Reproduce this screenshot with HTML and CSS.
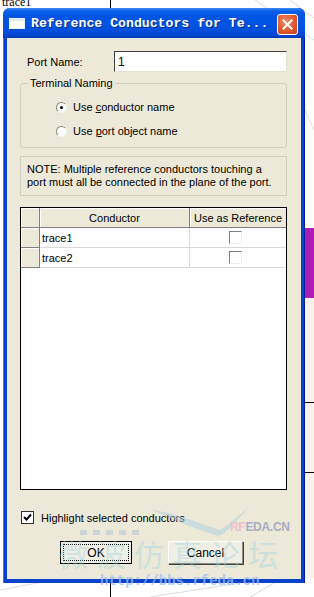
FILE: index.html
```html
<!DOCTYPE html>
<html>
<head>
<meta charset="utf-8">
<title>Reference Conductors for Terminal</title>
<link rel="stylesheet" href="styles.css">
</head>
<body>
<div class="desktop">
  <svg class="backdrop" width="314" height="597" viewBox="0 0 314 597">
    <g stroke="#dcdcdc" stroke-width="1" fill="none">
      <path d="M255 0 L314 40"/>
      <path d="M290 0 L314 18"/>
      <path d="M305 110 L314 130"/>
      <path d="M305 300 L314 330"/>
      <path d="M305 420 L314 440"/>
      <path d="M0 590 L80 575"/>
      <path d="M150 597 L240 583"/>
      <path d="M250 597 L314 560"/>
    </g>
    <line x1="110.5" y1="0" x2="110.5" y2="597" stroke="#000"/>
    <rect x="305" y="228" width="9" height="70" fill="#b01cb8"/>
    <rect x="305" y="298" width="9" height="280" fill="#faf2ef"/>
    <line x1="305" y1="402.5" x2="314" y2="402.5" stroke="#000"/>
    <line x1="305" y1="472.5" x2="314" y2="472.5" stroke="#000"/>
  </svg>
  <span class="bg-label">trace1</span>

  <div class="window">
    <div class="titlebar">
      <span class="title-icon"></span>
      <span class="title-text">Reference Conductors for Te...</span>
      <span class="close-btn">
        <svg width="11" height="11" viewBox="0 0 11 11">
          <path d="M1.5 1.5 L9.5 9.5 M9.5 1.5 L1.5 9.5" stroke="#fff" stroke-width="2" stroke-linecap="square"/>
        </svg>
      </span>
    </div>

    <div class="client">
      <div class="port-row">
        <label class="port-label" for="port-name">Port Name:</label>
        <input class="text-input" id="port-name" type="text" value="1">
      </div>

      <div class="group">
        <span class="legend">Terminal Naming</span>
        <div class="radio-row first">
          <span class="radio checked"></span>
          <span>Use <u>c</u>onductor name</span>
        </div>
        <div class="radio-row">
          <span class="radio"></span>
          <span>Use <u>p</u>ort object name</span>
        </div>
      </div>

      <div class="note">
        NOTE: Multiple reference conductors touching a<br>
        port must all be connected in the plane of the port.
      </div>

      <div class="grid">
        <div class="grid-row grid-head">
          <div class="row-head"></div>
          <div class="cell col-name">Conductor</div>
          <div class="cell col-ref">Use as Reference</div>
        </div>
        <div class="grid-row">
          <div class="row-head"></div>
          <div class="cell col-name">trace1</div>
          <div class="cell col-ref"><span class="cell-check"></span></div>
        </div>
        <div class="grid-row">
          <div class="row-head"></div>
          <div class="cell col-name">trace2</div>
          <div class="cell col-ref"><span class="cell-check"></span></div>
        </div>
      </div>

      <div class="check-row">
        <span class="checkbox">
          <svg width="9" height="9" viewBox="0 0 9 9">
            <path d="M1 4 L3.5 6.5 L8 1.5" stroke="#000" stroke-width="2" fill="none"/>
          </svg>
        </span>
        <span>Highlight selected conductors</span>
      </div>

      <div class="buttons">
        <button class="btn btn-default" type="button"><span class="focus-ring">OK</span></button>
        <button class="btn btn-cancel" type="button">Cancel</button>
      </div>
    </div>
  </div>

  <div class="watermark">
    <span class="wm-squares"><i></i><i></i><i></i><i></i><i></i></span>
    <svg class="wm-bird" width="100" height="40" viewBox="0 0 100 40">
      <path d="M2 10 C30 14 50 24 70 30 C80 24 90 14 98 8 C86 22 76 34 68 36 C48 30 24 20 2 10 Z" fill="#a9cfe0" opacity="0.5"/>
    </svg>
    <span class="wm-site"><span class="wm-rf">RF</span>EDA.CN</span>
    <span class="wm-cn">微波仿真论坛</span>
    <span class="wm-url">http://bbs.rfeda.cn</span>
  </div>
</div>
</body>
</html>
```

FILE: styles.css
```css
html, body { margin: 0; padding: 0; background-color: #fff; }
body { font-family: "Liberation Sans", Arial, sans-serif; font-size: 11px; color: #000; }

.desktop { position: relative; width: 314px; height: 597px; overflow: hidden; display: flex; align-items: flex-start; }
.backdrop { position: absolute; left: 0; top: 0; }
.bg-label { position: absolute; left: 2px; top: -5px; font-family: "Liberation Serif", serif; font-size: 12px; }

/* window frame */
.window { position: relative; margin: 8px 0 0 3px; width: 302px; height: 575px; display: flex; flex-direction: column;
  background-color: #0842cc; border-radius: 7px 7px 0 0; box-shadow: inset 1px 0 0 #3c74e6, inset -1px 0 0 #001ea0; }
.titlebar { height: 30px; flex: none; display: flex; align-items: center; padding: 0 7px 0 6px; border-radius: 7px 7px 0 0;
  background: linear-gradient(#3d8af7 0, #0a5fe8 3px, #0055e5 8px, #0053e0 20px, #0346d4 27px, #0038b0 30px); }
.title-icon { width: 14px; height: 9px; margin: 1px 6px 0 0; background: linear-gradient(#cfe0ff 0, #fff 3px); border: 1px solid #eef4ff; }
.title-text { flex: 1; color: #fff; font-family: "Liberation Mono", "Courier New", monospace; font-weight: bold; font-size: 13.2px;
  text-shadow: 1px 1px 0 #0a2c8a; white-space: nowrap; }
.close-btn { width: 19px; height: 19px; margin-top: 3px; display: flex; align-items: center; justify-content: center;
  border: 1px solid #fff; border-radius: 3px; background: radial-gradient(circle at 40% 35%, #f08a66 0, #e0582e 55%, #c8401a 100%); }

.client { flex: 1; margin: 0 4px 4px 4px; background-color: #ece9d8; padding: 13px 14px 0 13px; display: flex; flex-direction: column; }

/* port name */
.port-row { display: flex; align-items: center; height: 21px; }
.port-label { width: 87px; padding-left: 7px; }
.text-input { width: 173px; height: 21px; box-sizing: border-box; margin: 0; padding: 0 0 0 3px; border: 1px solid;
  border-color: #404040 #e4e2d4 #e4e2d4 #404040; font: inherit; font-size: 12px; background: #fff; outline: none; }

/* group box */
.group { margin-top: 11px; height: 65px; box-sizing: border-box; border: 1px solid #d0d0bf; border-radius: 3px; padding-left: 35px; }
.legend { display: inline-block; line-height: 13px; margin: -7px 0 0 -28px; padding: 0 2px; background-color: #ece9d8; vertical-align: top; }
.radio-row { display: flex; align-items: center; height: 16px; margin-top: 8px; }
.radio-row.first { margin-top: 3px; }
.radio { width: 11px; height: 11px; box-sizing: border-box; margin-right: 6px; border-radius: 50%; background: #fff;
  border: 1px solid; border-color: #8a8a80 #f4f4f0 #f4f4f0 #8a8a80; position: relative; }
.radio.checked::after { content: ""; position: absolute; left: 3px; top: 3px; width: 3px; height: 3px; border-radius: 50%; background: #000; }

/* note */
.note { margin-top: 8px; height: 40px; box-sizing: border-box; border: 1px solid #d0d0bf; padding: 6px 0 0 6px; line-height: 13px; }

/* grid */
.grid { margin-top: 11px; height: 283px; box-sizing: border-box; border: 1px solid #000; background: #fff; }
.grid-row { display: flex; height: 20px; border-bottom: 1px solid #d8d8d8; box-sizing: border-box; }
.row-head { width: 19px; flex: none; box-sizing: border-box; background: #ece9d8; border-right: 1px solid #808080; border-bottom: 1px solid #808080;
  box-shadow: inset 1px 1px 0 #fff; margin-bottom: -1px; }
.cell { display: flex; align-items: center; box-sizing: border-box; padding-left: 2px; }
.col-name { width: 150px; border-right: 1px solid #d8d8d8; }
.col-ref { flex: 1; justify-content: center; padding-left: 0; }
.grid-head { border-bottom: 1px solid #808080; }
.grid-head .cell { justify-content: center; background: #ece9d8; box-shadow: inset 1px 1px 0 #fff; border-right: 1px solid #808080; padding: 0; }
.grid-head .col-ref { border-right: none; }
.cell-check { width: 13px; height: 13px; box-sizing: border-box; margin-left: -6px; border: 1px solid; border-color: #808080 #f0f0f0 #f0f0f0 #808080; }

/* bottom */
.check-row { display: flex; align-items: center; margin-top: 21px; height: 13px; }
.checkbox { width: 11px; height: 11px; margin: 0 7px 0 1px; border: 1px solid #303030; background: #fff; display: flex; align-items: center; justify-content: center; }
.buttons { display: flex; margin-top: 17px; padding-left: 40px; gap: 36px; }
.btn { height: 23px; margin: 0; padding: 0; font: inherit; font-size: 12px; color: #000; background: #f0efe6; box-sizing: border-box; }
.btn-default { width: 72px; border: 1px solid #000; display: flex; align-items: center; justify-content: center; }
.focus-ring { display: flex; align-items: center; justify-content: center; width: 64px; height: 15px; border: 1px dotted #000; }
.btn-cancel { width: 75px; border: 1px solid; border-color: #fff #8a8a80 #8a8a80 #fff; box-shadow: 1px 1px 0 #404040; }

/* forum watermark over the dialog */
.watermark { position: absolute; left: 0; top: 0; width: 314px; height: 597px; pointer-events: none; }
.wm-squares { position: absolute; left: 80px; top: 530px; display: flex; gap: 6px; }
.wm-squares i { width: 7px; height: 5px; background: #b8c6d8; opacity: 0.6; }
.wm-bird { position: absolute; left: 150px; top: 500px; }
.wm-site { position: absolute; left: 230px; top: 520px; font-weight: bold; font-size: 12px; color: #a8aec4; letter-spacing: -0.3px; }
.wm-rf { color: #f2bccb; }
.wm-cn { position: absolute; left: 58px; top: 531px; font-family: "Noto Sans CJK SC", sans-serif; font-size: 30px;
  letter-spacing: 8px; color: #9fd2de; opacity: 0.4; white-space: nowrap; }
.wm-url { position: absolute; left: 100px; top: 573px; font-family: "Liberation Mono", monospace; font-weight: bold; font-size: 14px;
  color: #9dbcf0; opacity: 0.75; }
```
